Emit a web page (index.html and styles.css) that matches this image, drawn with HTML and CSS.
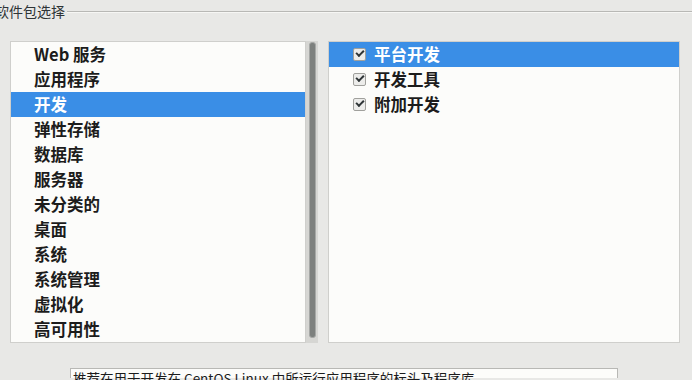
FILE: index.html
```html
<!DOCTYPE html>
<html lang="zh-CN">
<head>
  <meta charset="UTF-8">
  <title>软件包选择</title>
  <link rel="stylesheet" href="styles.css">
</head>
<body>
  <div class="frame">
    <div class="legend">
      <span class="legend-text">软件包选择</span>
      <span class="legend-line"></span>
    </div>

    <div class="panes">
      <div class="env-wrap">
        <ul class="env-list">
          <li>Web 服务</li>
          <li>应用程序</li>
          <li class="selected">开发</li>
          <li>弹性存储</li>
          <li>数据库</li>
          <li>服务器</li>
          <li>未分类的</li>
          <li>桌面</li>
          <li>系统</li>
          <li>系统管理</li>
          <li>虚拟化</li>
          <li>高可用性</li>
        </ul>
        <div class="scrollbar"><div class="thumb"></div></div>
      </div>

      <ul class="addon-list">
        <li class="selected"><span class="check"></span>平台开发</li>
        <li><span class="check"></span>开发工具</li>
        <li><span class="check"></span>附加开发</li>
      </ul>
    </div>

    <div class="desc">推荐在用于开发在 CentOS Linux 中所运行应用程序的标头及程序库。</div>
  </div>
</body>
</html>
```

FILE: styles.css
```css
body {
  margin: 0;
  width: 692px;
  height: 380px;
  overflow: hidden;
  background: #e8e8e6;
  color: #2e3436;
  font-family: "Noto Sans CJK SC", "DejaVu Sans", sans-serif;
}
.frame {
  display: flex;
  flex-direction: column;
}
.legend {
  display: flex;
  align-items: center;
  height: 22px;
  margin-left: -5px;
}
.legend-text {
  font-size: 14px;
  line-height: 22px;
  color: #2e3436;
  padding-right: 2px;
}
.legend-line {
  flex: 1;
  height: 1px;
  background: #b8b8b5;
  border-bottom: 1px solid #f6f6f4;
  margin-top: 1px;
}
.panes {
  display: flex;
  margin-top: 19px;
  padding-left: 10px;
  gap: 10px;
}
ul {
  list-style: none;
  margin: 0;
  padding: 0;
}
.env-wrap {
  display: flex;
}
.env-list {
  width: 294px;
  height: 300px;
  border: 1px solid #cfcfcc;
  background: #fcfcfa;
}
.env-list li,
.addon-list li {
  height: 25px;
  line-height: 25px;
  font-size: 16.5px;
  font-weight: bold;
  color: #1c1c1c;
}
.env-list li {
  padding-left: 23px;
}
.selected {
  background: #3a8ee6;
  color: #fff !important;
}
.scrollbar {
  width: 12px;
  height: 302px;
  background: #d6d6d3;
  display: flex;
  justify-content: center;
  padding-top: 1px;
  box-sizing: border-box;
}
.thumb {
  width: 7px;
  height: 296px;
  background: #7d807e;
  border: 1px solid #a6a8a6;
  border-radius: 3px;
  box-sizing: border-box;
}
.addon-list {
  width: 350px;
  height: 300px;
  border: 1px solid #cfcfcc;
  background: #fcfcfa;
}
.addon-list li {
  display: flex;
  align-items: center;
  padding-left: 24px;
}
.check {
  width: 11px;
  height: 11px;
  margin-right: 8px;
  border: 1px solid #a0a09c;
  border-radius: 2px;
  background: #ececea;
  position: relative;
}
.check::after {
  content: "";
  position: absolute;
  left: 2px;
  top: 1px;
  width: 6px;
  height: 3px;
  border-left: 2px solid #2e3436;
  border-bottom: 2px solid #2e3436;
  transform: rotate(-45deg);
}
.desc {
  margin: 25px 0 0 70px;
  width: 542px;
  height: 8px;
  border: 1px solid #b8b8b5;
  border-bottom: none;
  background: #fcfcfa;
  font-size: 13.5px;
  line-height: 16px;
  padding: 1px 2px 0;
  color: #1c1c1c;
  white-space: nowrap;
}
```
